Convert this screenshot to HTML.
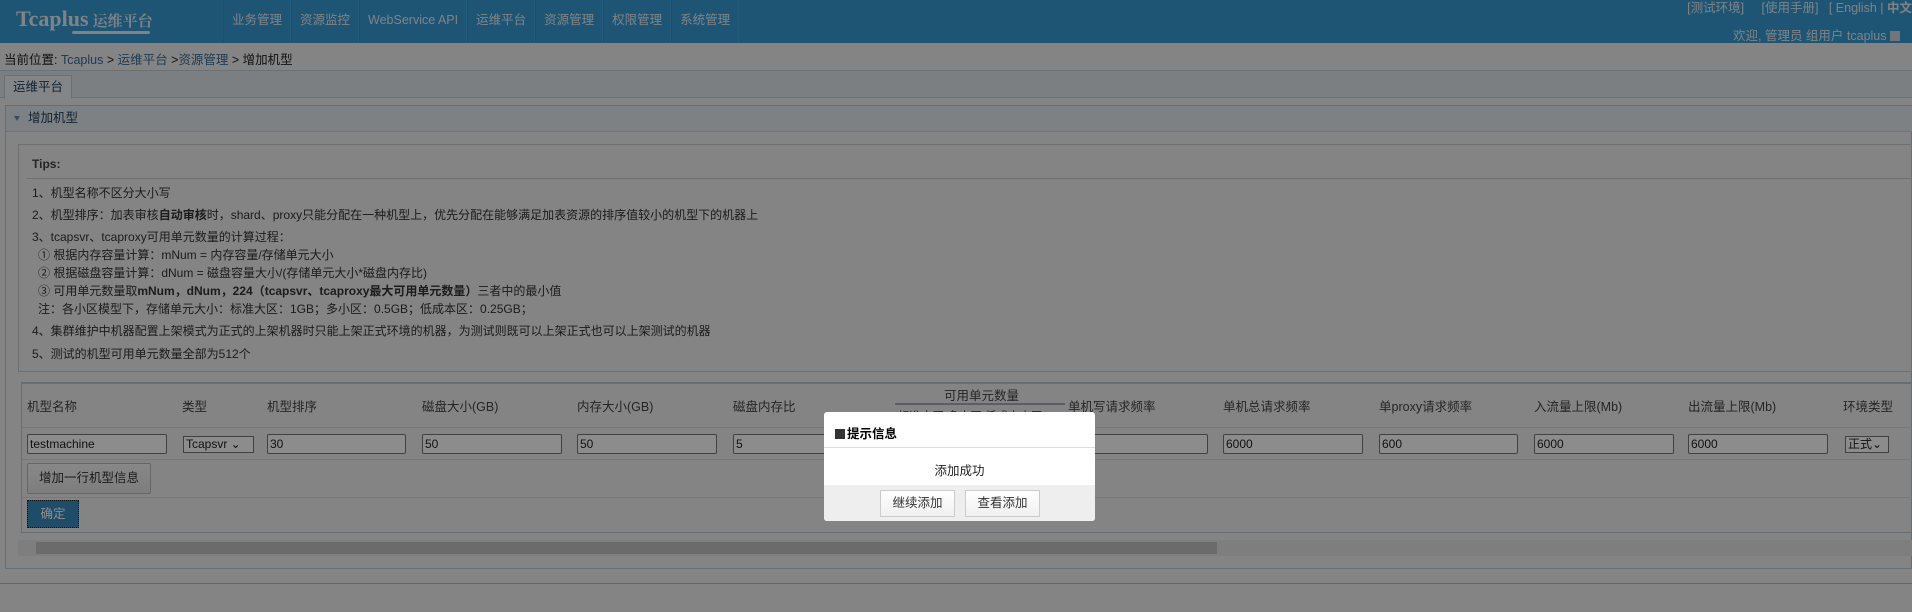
<!DOCTYPE html>
<html><head><meta charset="utf-8"><style>
*{box-sizing:border-box;margin:0;padding:0}
body{width:1912px;height:612px;overflow:hidden;background:#f0f0f0;font-family:"Liberation Sans","Noto Sans CJK SC",sans-serif;font-size:12px;color:#333;position:relative}
.abs{position:absolute}
#hd{left:0;top:0;width:1912px;height:43px;background:#389cd5}
.logo{left:16px;top:6px;font-family:"Liberation Serif","Noto Serif CJK SC",serif;font-size:22px;color:#e8eef3;font-weight:bold;white-space:nowrap}
.logo span{font-size:15px;margin-left:4px}
.logoline{left:72px;top:31px;width:78px;height:3px;background:#e8eef3;border-radius:2px}
.nav{left:223px;top:0;height:43px;display:flex}
.nav div{height:43px;line-height:40px;padding:0 8px;color:#e8eef3;font-size:12.5px;border-left:1px solid #3492c8;border-right:1px solid #3fa6e0}
.topr{right:0;top:-3px;color:#e6edf2;font-size:12.5px;white-space:nowrap}
.topr2{right:12px;top:25px;color:#e6edf2;font-size:12.5px;white-space:nowrap}
.bc{left:4px;top:49px;font-size:12.5px;color:#222}
.bc a{color:#3a6c9a}
#tabbar{left:0;top:70px;width:1912px;height:28px;background:#e2e7ec;border-top:1px solid #c4ccd4;border-bottom:1px solid #c4ccd4}
.tab{left:4px;top:75px;width:68px;height:24px;background:#eef2f6;border:1px solid #c4ccd4;border-bottom:none;line-height:22px;text-align:center;font-size:12.5px;color:#1a3d5c}
#panel{left:5px;top:105px;width:1907px;height:464px;border:1px solid #b9c7d6;background:#f0f0f0}
.ph{left:6px;top:106px;width:1906px;height:26px;background:#e6ebf0;border-bottom:1px solid #ccd4dc;font-size:12.5px;color:#1a3d5c;line-height:24px;padding-left:22px}
.tri{left:14px;top:116px;width:0;height:0;border-left:3px solid transparent;border-right:3px solid transparent;border-top:5px solid #6a8db0}
#tips{left:18px;top:144px;width:1894px;height:228px;border:1px solid #ccc;background:#f0f0f0}
.t{position:absolute;left:32px;font-size:12px;color:#333;white-space:nowrap}
#tbl{left:21px;top:382px;width:1891px;height:151px;border:1px solid #b9c7d6;border-top:2px solid #b9c7d6;background:#f0f0f0}
.th{position:absolute;top:396px;font-size:12.5px;color:#444;white-space:nowrap}
.rowline{position:absolute;left:22px;width:1890px;height:1px;background:#ddd}
.in{position:absolute;top:434px;height:20px;border:1px solid #777;background:#fff;font-size:12px;padding-left:2px;line-height:18px;border-radius:2px;color:#222}
.sel{position:absolute;top:436px;height:17px;border:1px solid #777;background:#fff;font-size:12px;padding-left:2px;line-height:15px;color:#222;white-space:nowrap;overflow:hidden}
.btn{position:absolute;left:27px;top:463px;width:124px;height:31px;border:1px solid #bbb;background:linear-gradient(#f7f7f7,#e5e5e5);text-align:center;line-height:29px;color:#333;font-size:12.5px;border-radius:2px}
.ok{position:absolute;left:27px;top:500px;width:52px;height:28px;background:#3a8ac0;border:1px dotted #222;color:#fff;text-align:center;line-height:26px;font-size:12.5px}
.sb{left:18px;top:540px;width:1894px;height:16px;background:#e6e6e6}
.thumb{left:36px;top:542px;width:1181px;height:12px;background:#c4c4c4}
.bottom{left:0;top:583px;width:1912px;height:1px;background:#bbb}
#ov{left:0;top:0;width:1912px;height:612px;background:rgba(0,0,0,0.45)}
#dlg{left:824px;top:412px;width:271px;height:109px;background:#fff;border-radius:3px;overflow:hidden}
.dt{position:absolute;left:11px;top:11px;font-size:12.5px;color:#000;font-weight:bold}
.dt i{display:inline-block;width:10px;height:10px;background:#333;margin-right:2px;vertical-align:-1px}
.dsep{position:absolute;left:0;top:35px;width:271px;height:1px;background:#ddd}
.dm{position:absolute;left:0;top:48px;width:271px;text-align:center;font-size:12.5px;color:#222}
.df{position:absolute;left:0;top:73px;width:271px;height:36px;background:#eee}
.db{position:absolute;top:5px;width:75px;height:27px;border:1px solid #ccc;background:linear-gradient(#fff,#f0f0f0);text-align:center;line-height:25px;font-size:12.5px;color:#333}
</style></head><body>
<div id="hd" class="abs"></div>
<div class="abs logo">Tcaplus<span>运维平台</span></div>
<div class="abs logoline"></div>
<div class="abs nav"><div>业务管理</div><div>资源监控</div><div>WebService API</div><div>运维平台</div><div>资源管理</div><div>权限管理</div><div>系统管理</div></div>
<div class="abs topr">[测试环境] &nbsp;&nbsp;&nbsp; [使用手册] &nbsp; [ English | <b>中文</b></div>
<div class="abs topr2">欢迎, 管理员 组用户 tcaplus <span style="display:inline-block;width:10px;height:10px;background:#cfd8df;vertical-align:-1px"></span></div>
<div class="abs bc">当前位置: <a>Tcaplus</a> &gt; <a>运维平台</a> &gt;<a>资源管理</a> &gt; 增加机型</div>
<div id="tabbar" class="abs"></div>
<div class="abs tab">运维平台</div>
<div id="panel" class="abs"></div>
<div class="abs ph">增加机型</div>
<div class="abs tri"></div>
<div id="tips" class="abs"></div>
<div class="t" style="top:157px;font-weight:bold;color:#444">Tips:</div>
<div class="abs" style="left:27px;top:178px;width:1885px;height:1px;background:#ccc"></div>
<div class="t" style="top:184px">1、机型名称不区分大小写</div>
<div class="t" style="top:206px">2、机型排序：加表审核<b>自动审核</b>时，shard、proxy只能分配在一种机型上，优先分配在能够满足加表资源的排序值较小的机型下的机器上</div>
<div class="t" style="top:228px">3、tcapsvr、tcaproxy可用单元数量的计算过程：</div>
<div class="t" style="top:246px;left:38px">① 根据内存容量计算：mNum = 内存容量/存储单元大小</div>
<div class="t" style="top:264px;left:38px">② 根据磁盘容量计算：dNum = 磁盘容量大小/(存储单元大小*磁盘内存比)</div>
<div class="t" style="top:282px;left:38px">③ 可用单元数量取<b>mNum，dNum，224（tcapsvr、tcaproxy最大可用单元数量）</b>三者中的最小值</div>
<div class="t" style="top:300px;left:38px">注：各小区模型下，存储单元大小：标准大区：1GB；多小区：0.5GB；低成本区：0.25GB；</div>
<div class="t" style="top:322px">4、集群维护中机器配置上架模式为正式的上架机器时只能上架正式环境的机器，为测试则既可以上架正式也可以上架测试的机器</div>
<div class="t" style="top:345px">5、测试的机型可用单元数量全部为512个</div>
<div id="tbl" class="abs"></div>
<div class="th" style="left:27px">机型名称</div>
<div class="th" style="left:182px">类型</div>
<div class="th" style="left:267px">机型排序</div>
<div class="th" style="left:422px">磁盘大小(GB)</div>
<div class="th" style="left:577px">内存大小(GB)</div>
<div class="th" style="left:733px">磁盘内存比</div>
<div class="th" style="left:944px;top:385px">可用单元数量</div>
<div class="abs" style="left:895px;top:403px;width:170px;height:2px;background:#aab"></div>
<div class="th" style="left:898px;top:408px;font-size:11.5px">标准大区 多小区 低成本大区</div>
<div class="th" style="left:1068px">单机写请求频率</div>
<div class="th" style="left:1223px">单机总请求频率</div>
<div class="th" style="left:1379px">单proxy请求频率</div>
<div class="th" style="left:1534px">入流量上限(Mb)</div>
<div class="th" style="left:1688px">出流量上限(Mb)</div>
<div class="th" style="left:1843px">环境类型</div>
<div class="rowline" style="top:427px"></div>
<div class="rowline" style="top:459px"></div>
<div class="rowline" style="top:497px"></div>
<div class="in" style="left:27px;width:140px">testmachine</div>
<div class="sel" style="left:183px;width:71px">Tcapsvr ⌄</div>
<div class="in" style="left:267px;width:139px">30</div>
<div class="in" style="left:422px;width:140px">50</div>
<div class="in" style="left:577px;width:140px">50</div>
<div class="in" style="left:733px;width:140px">5</div>
<div class="in" style="left:1068px;width:140px">0</div>
<div class="in" style="left:1223px;width:140px">6000</div>
<div class="in" style="left:1379px;width:139px">600</div>
<div class="in" style="left:1534px;width:140px">6000</div>
<div class="in" style="left:1688px;width:140px">6000</div>
<div class="sel" style="left:1845px;width:44px">正式⌄</div>
<div class="btn">增加一行机型信息</div>
<div class="ok">确定</div>
<div class="abs sb"></div>
<div class="abs thumb"></div>
<div class="abs bottom"></div>
<div id="ov" class="abs"></div>
<div id="dlg" class="abs">
<div class="dt"><i></i>提示信息</div>
<div class="dsep"></div>
<div class="dm">添加成功</div>
<div class="df"><div class="db" style="left:56px">继续添加</div><div class="db" style="left:141px">查看添加</div></div>
</div>
</body></html>
